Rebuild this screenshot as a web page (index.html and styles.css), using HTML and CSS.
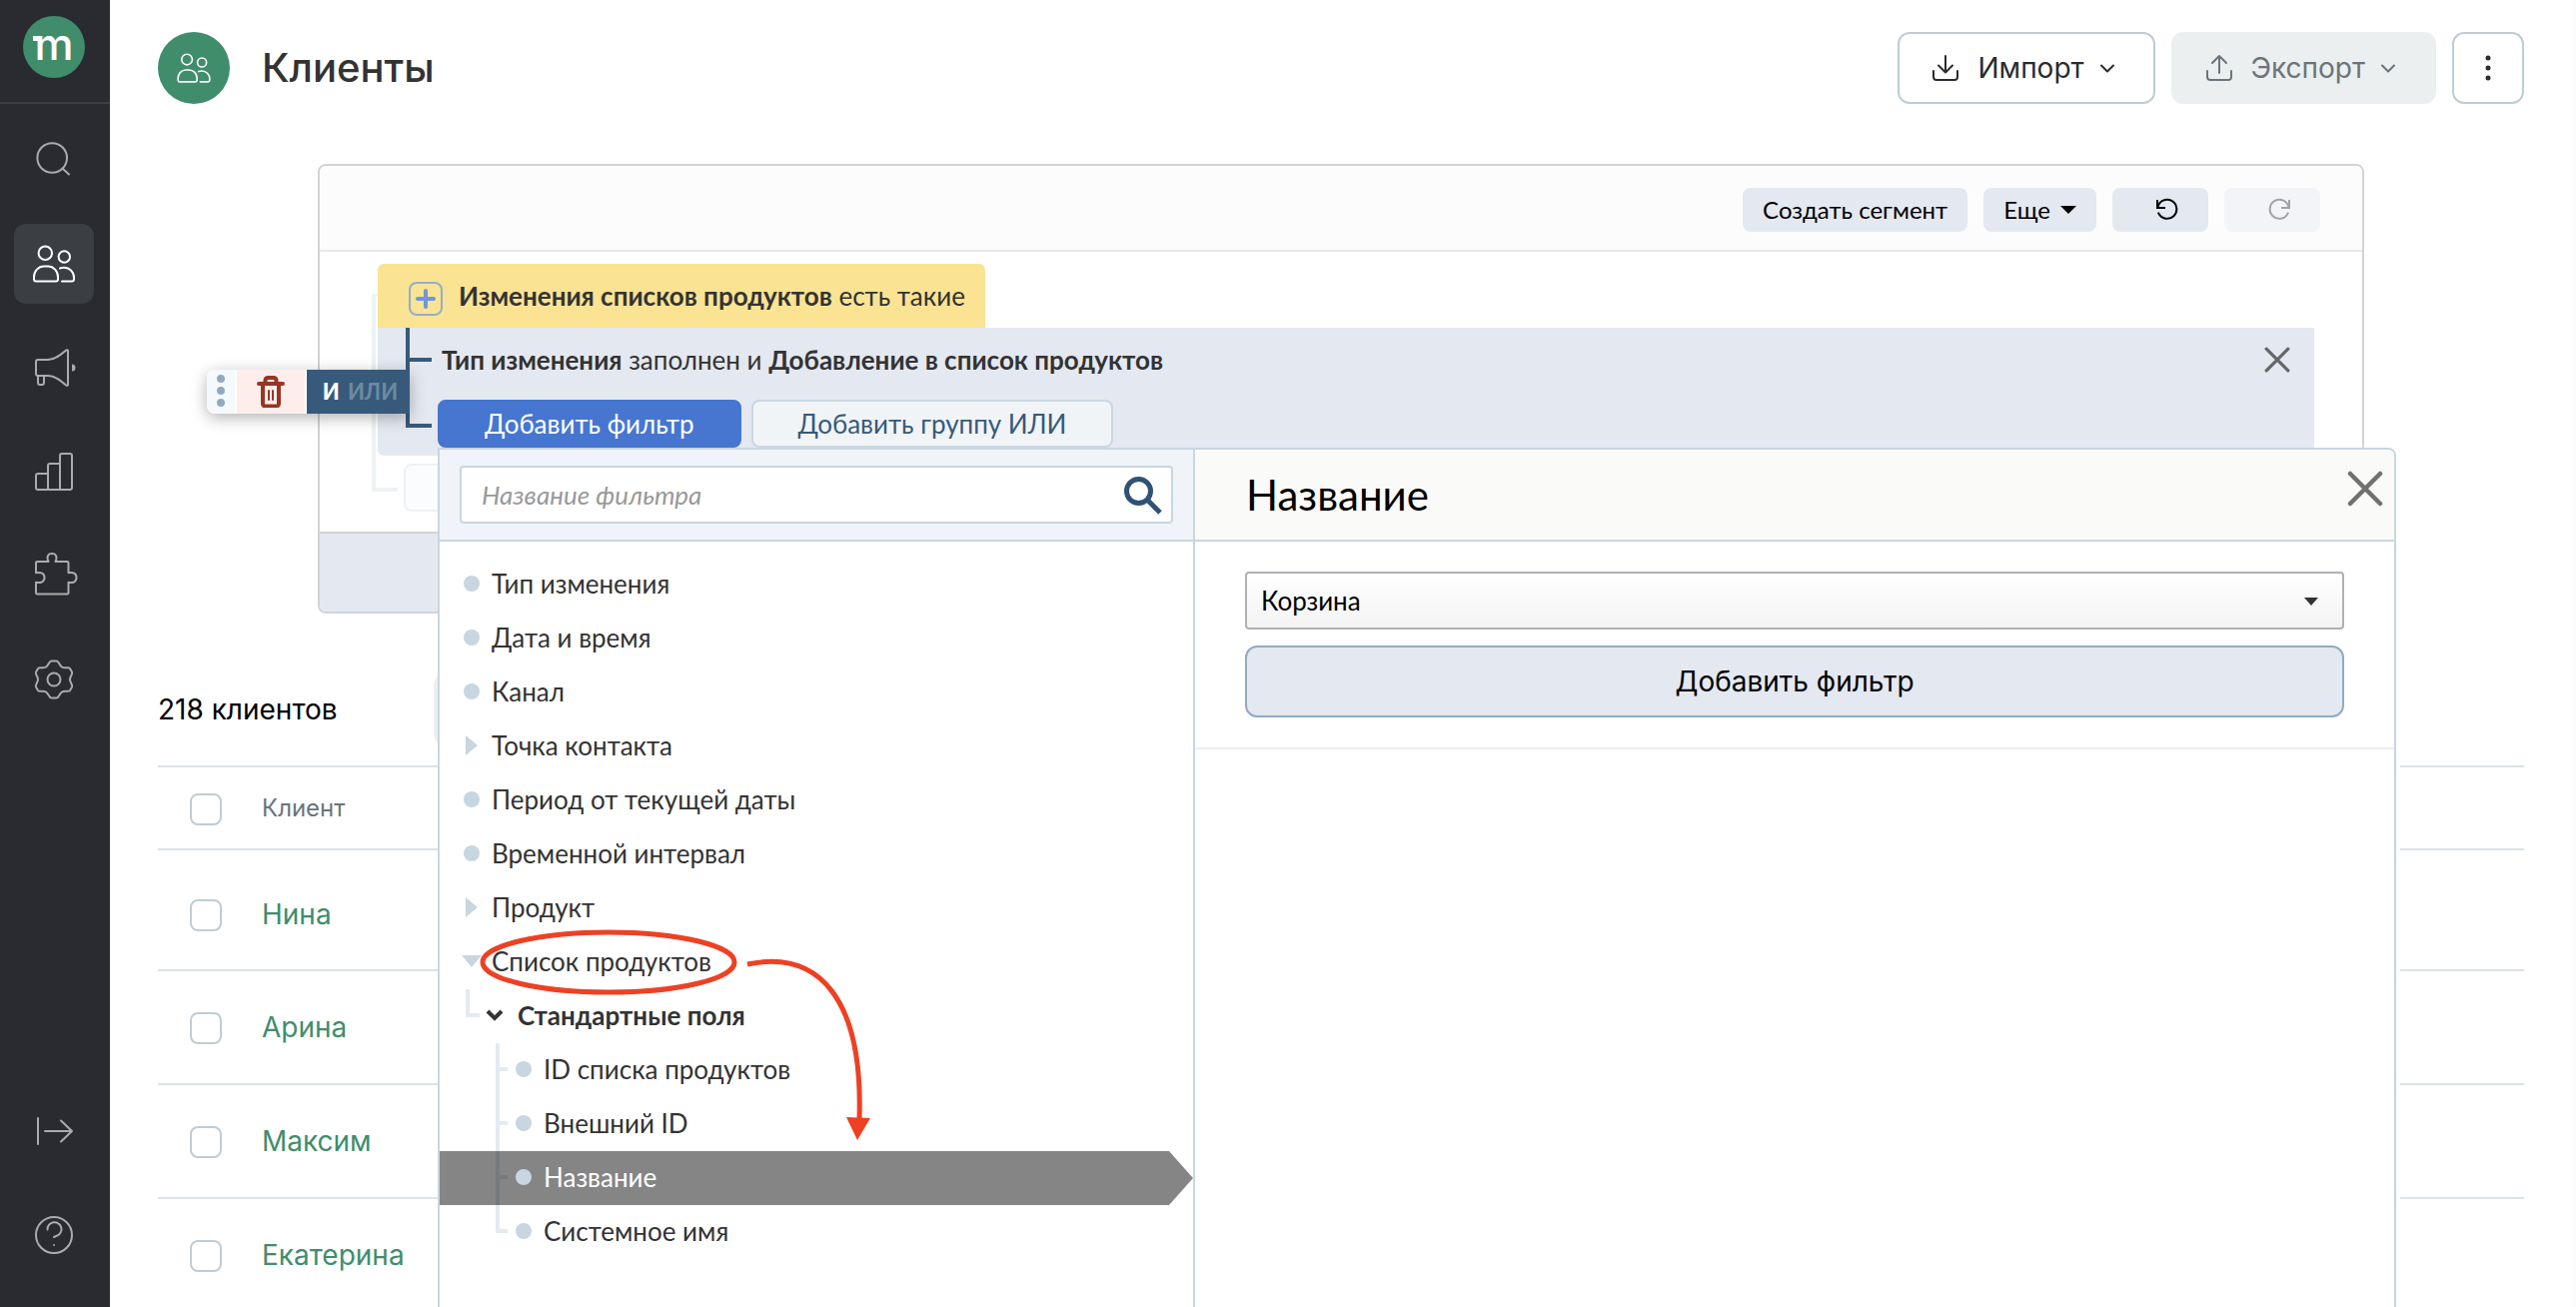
FILE: index.html
```html
<!DOCTYPE html>
<html lang="ru">
<head>
<meta charset="utf-8">
<meta name="viewport" content="width=device-width, initial-scale=1">
<title>Клиенты</title>
<link rel="stylesheet" href="styles.css">
</head>
<body>
<svg class="sprite" aria-hidden="true">
  <symbol id="i-users" viewBox="0 0 48 48"><circle cx="15.3" cy="13.3" r="6.7"/><circle cx="34.3" cy="17" r="5.7"/><path d="M4 39.5V37a10 10.500 0 0 1 10-10.500h4A10 10.500 0 0 1 28 37v2.500a2 2 0 0 1-2 2H6a2 2 0 0 1-2-2z"/><path d="M30 28.500c1.200-.5 2.500-.8 4-.8a10 10 0 0 1 10 10v1.800a2 2 0 0 1-2 2H32"/></symbol>
  <symbol id="i-chevron" viewBox="0 0 24 24"><path d="M6 9.500l6 6 6-6"/></symbol>
  <symbol id="i-close" viewBox="0 0 24 24"><path d="M2 2l20 20M22 2L2 22"/></symbol>
</svg>
<div class="app">
  <aside class="sidebar">
    <div class="sidebar__brand"><a class="logo" href="#">m</a></div>
    <nav class="sidebar__nav" aria-label="Разделы">
      <a class="nav-item" href="#" aria-label="Поиск"><svg viewBox="0 0 48 48"><circle cx="22.200" cy="22" r="14.800"/><path d="M32.500 32.500l6.500 6"/></svg></a>
      <a class="nav-item nav-item--active" href="#" aria-label="Клиенты"><svg><use href="#i-users"/></svg></a>
      <a class="nav-item" href="#" aria-label="Кампании"><svg viewBox="0 0 48 48"><path d="M8 16H18C25 16 31 11 36.500 6.300A1 1 0 0 1 38 7V41a1 1 0 0 1-1.500.7C31 37 25 32 18 32H8a2 2 0 0 1-2-2V18a2 2 0 0 1 2-2z"/><path d="M8 32v7a2 2 0 0 0 2 2h2a2 2 0 0 0 2-2v-7"/><path class="solid" d="M42 20.500a3.500 3.500 0 0 1 0 7z"/></svg></a>
      <a class="nav-item" href="#" aria-label="Отчёты"><svg viewBox="0 0 48 48"><path d="M18 26H8a2 2 0 0 0-2 2V40a2 2 0 0 0 2 2H18zM30 16H20a2 2 0 0 0-2 2V42H30zM32 6h8a2 2 0 0 1 2 2V40a2 2 0 0 1-2 2H30V8a2 2 0 0 1 2-2z"/></svg></a>
      <a class="nav-item" href="#" aria-label="Интеграции"><svg viewBox="0 0 48 48"><path d="M7.500 10H18.500C16 4.500 18.500 2 22 2S28 4.500 25.500 10H37a1.500 1.500 0 0 1 1.500 1.500V21.300C43 20 46.500 22 46.500 26S43 32 38.500 30.700V41a1.500 1.500 0 0 1-1.500 1.500H7.500A1.500 1.500 0 0 1 6 41V30.700C11 32 14.500 30 14.500 26S11 20 6 21.300V11.500A1.500 1.500 0 0 1 7.500 10z"/></svg></a>
      <a class="nav-item" href="#" aria-label="Настройки"><svg viewBox="0 0 48 48"><path d="M21.500 5.500h5c2.500 0 2.500 4 5.500 6c3 2 6.500-.5 8 1.500l2 3.500c1.200 2.300-2 4-2 7.500c0 3.500 3.200 5.200 2 7.500l-2 3.500c-1.500 2-5-.5-8 1.500c-3 2-3 6-5.500 6h-5c-2.500 0-2.500-4-5.500-6c-3-2-6.500.5-8-1.500l-2-3.500c-1.200-2.300 2-4 2-7.500c0-3.500-3.200-5.200-2-7.500l2-3.500c1.500-2 5 .5 8-1.500c3-2 3-6 5.500-6z"/><circle cx="24" cy="24" r="6.500"/></svg></a>
    </nav>
    <div class="sidebar__nav sidebar__nav--bottom">
      <a class="nav-item" href="#" aria-label="Развернуть меню"><svg viewBox="0 0 48 48"><path d="M8 11V37M15 24H42M31 13.500L42 24 31 34.500"/></svg></a>
      <a class="nav-item" href="#" aria-label="Помощь"><svg viewBox="0 0 48 48"><circle cx="24" cy="24" r="18"/><path d="M17.500 18.500a7 7 0 1 1 9.500 6.200l-3 1.300"/><circle class="solid" cx="24" cy="34" r="1"/></svg></a>
    </div>
  </aside>

  <main class="main">
    <header class="page-head">
      <span class="page-head__icon"><svg><use href="#i-users"/></svg></span>
      <h1 class="page-head__title">Клиенты</h1>
      <div class="page-head__actions">
        <button class="btn btn--outline" type="button"><svg class="btn__icon" viewBox="0 0 32 32"><path d="M16 4V20M9 13.500l7 7 7-7M4 19v6a3 3 0 0 0 3 3H25a3 3 0 0 0 3-3V19"/></svg>Импорт<svg class="btn__chevron"><use href="#i-chevron"/></svg></button>
        <button class="btn btn--muted" type="button"><svg class="btn__icon" viewBox="0 0 32 32"><path d="M16 21V4M9 11l7-7 7 7M4 19v6a3 3 0 0 0 3 3H25a3 3 0 0 0 3-3V19"/></svg>Экспорт<svg class="btn__chevron"><use href="#i-chevron"/></svg></button>
        <button class="btn btn--outline btn--square" type="button" aria-label="Ещё действия"><svg class="btn__icon" viewBox="0 0 32 32"><circle class="solid" cx="16" cy="6" r="2.500"/><circle class="solid" cx="16" cy="16" r="2.500"/><circle class="solid" cx="16" cy="26" r="2.500"/></svg></button>
      </div>
    </header>

    <section class="segment" aria-label="Фильтр клиентов">
      <div class="segment__toolbar">
        <button class="tool" type="button">Создать сегмент</button>
        <button class="tool" type="button">Еще<span class="caret"></span></button>
        <button class="tool tool--icon" type="button" aria-label="Отменить"><svg viewBox="0 0 24 24"><path d="M2 3v7h7M2.500 9.500A9.500 9.500 0 1 1 3.300 15.500"/></svg></button>
        <button class="tool tool--icon" type="button" aria-label="Повторить" disabled><svg viewBox="0 0 24 24"><path d="M22 3v7h-7M21.500 9.500A9.500 9.500 0 1 0 20.700 15.500"/></svg></button>
      </div>
      <div class="segment__body">
        <div class="group">
          <div class="group__head">
            <button class="group__plus" type="button" aria-label="Добавить условие"><svg viewBox="0 0 24 24"><path d="M12 4V20M4 12H20"/></svg></button>
            <span><b>Изменения списков продуктов</b> есть такие</span>
          </div>
          <div class="group__body">
            <div class="handle">
              <span class="handle__drag"><i></i><i></i><i></i></span>
              <button class="handle__delete" type="button" aria-label="Удалить"><svg viewBox="0 0 28 32"><path class="line" d="M6 9V28a2.500 2.500 0 0 0 2.500 2.500h11A2.500 2.500 0 0 0 22 28V9M2 8H26M8.500 7V5A3 3 0 0 1 11 2h6a3 3 0 0 1 2.500 3V7"/><path class="thin" d="M12 15v9M16 15v9"/></svg></button>
              <button class="handle__mode" type="button"><b>И</b><span>ИЛИ</span></button>
            </div>
            <div class="condition">
              <span><b>Тип изменения</b> заполнен и <b>Добавление в список продуктов</b></span>
              <button class="condition__close" type="button" aria-label="Удалить условие"><svg><use href="#i-close"/></svg></button>
            </div>
            <div class="group__actions">
              <button class="add add--primary" type="button">Добавить фильтр</button>
              <button class="add" type="button">Добавить группу ИЛИ</button>

              <div class="popover">
                <div class="popover__list">
                  <div class="search">
                    <label class="search__box">
                      <input type="text" placeholder="Название фильтра" aria-label="Название фильтра">
                      <svg viewBox="0 0 40 40"><circle cx="15.500" cy="16.500" r="12"/><path d="M24.500 25.500L37 38"/></svg>
                    </label>
                  </div>
                  <div class="tree">
                    <button class="tree__row" type="button"><i class="dot"></i>Тип изменения</button>
                    <button class="tree__row" type="button"><i class="dot"></i>Дата и время</button>
                    <button class="tree__row" type="button"><i class="dot"></i>Канал</button>
                    <button class="tree__row" type="button"><i class="arrow"></i>Точка контакта</button>
                    <button class="tree__row" type="button"><i class="dot"></i>Период от текущей даты</button>
                    <button class="tree__row" type="button"><i class="dot"></i>Временной интервал</button>
                    <button class="tree__row" type="button"><i class="arrow"></i>Продукт</button>
                    <button class="tree__row" type="button" aria-expanded="true"><i class="arrow arrow--down"></i>Список продуктов</button>
                    <button class="tree__row tree__row--section" type="button" aria-expanded="true"><svg viewBox="0 0 18 18"><path d="M2 5l7 7 7-7"/></svg>Стандартные поля</button>
                    <ul class="tree__children">
                      <li><button class="tree__row" type="button"><i class="dot"></i>ID списка продуктов</button></li>
                      <li><button class="tree__row" type="button"><i class="dot"></i>Внешний ID</button></li>
                      <li><button class="tree__row tree__row--selected" type="button"><i class="dot"></i>Название</button></li>
                      <li><button class="tree__row" type="button"><i class="dot"></i>Системное имя</button></li>
                    </ul>
                    <svg class="note" viewBox="0 0 400 220" aria-hidden="true"><ellipse cx="129" cy="33" rx="126" ry="30"/><path d="M268 35C340 20 384 70 380 190"/><path class="note__tip" d="M367 188L391 189 378 211z"/></svg>
                  </div>
                </div>
                <div class="popover__detail">
                  <div class="detail__head">
                    <h2>Название</h2>
                    <button class="detail__close" type="button" aria-label="Закрыть"><svg><use href="#i-close"/></svg></button>
                  </div>
                  <form class="detail__form">
                    <div class="select">
                      <select aria-label="Название списка"><option>Корзина</option></select>
                    </div>
                    <button class="submit" type="button">Добавить фильтр</button>
                  </form>
                </div>
              </div>
            </div>
          </div>
        </div>
        <button class="segment__add" type="button" aria-label="Добавить фильтр верхнего уровня"></button>
      </div>
      <div class="segment__foot"></div>
    </section>

    <div class="summary"><span>218 клиентов</span><span class="summary__chip"></span></div>

    <table class="clients">
      <thead>
        <tr><th class="clients__check"><input type="checkbox" aria-label="Выбрать всех"></th><th>Клиент</th></tr>
      </thead>
      <tbody>
        <tr><td><input type="checkbox" aria-label="Выбрать: Нина"></td><td><a href="#">Нина</a></td></tr>
        <tr><td><input type="checkbox" aria-label="Выбрать: Арина"></td><td><a href="#">Арина</a></td></tr>
        <tr><td><input type="checkbox" aria-label="Выбрать: Максим"></td><td><a href="#">Максим</a></td></tr>
        <tr><td><input type="checkbox" aria-label="Выбрать: Екатерина"></td><td><a href="#">Екатерина</a></td></tr>
      </tbody>
    </table>
  </main>
</div>
</body>
</html>
```

FILE: styles.css
```css
:root {
  --green: #408d6c;
  --navy: #375a7b;
  --haze: #e4e8f0;
  --edge: #c9d6e0;
  --ink: #333333;
  --ui: Inter, "Liberation Sans", sans-serif;
  --filter: Lato, "Open Sans", sans-serif;
}

*, *::before, *::after { box-sizing: border-box; }

body {
  margin: 0;
  background: #ffffff;
  color: var(--ink);
  font-family: var(--ui);
  font-size: 28px;
  line-height: 36px;
}

button, input, select {
  margin: 0;
  padding: 0;
  border: 0;
  background: none;
  color: inherit;
  font: inherit;
}

svg {
  display: block;
  fill: none;
  stroke: currentColor;
  stroke-width: 2;
  stroke-linecap: round;
  stroke-linejoin: round;
}

.solid { fill: currentColor; stroke: none; }
.sprite { position: absolute; width: 0; height: 0; }

.app {
  display: flex;
  height: 100vh;
  overflow: hidden;
}

/* Sidebar */
.sidebar {
  display: flex;
  flex-direction: column;
  flex: none;
  width: 110px;
  padding-bottom: 32px;
  background: #2a2b30;
  color: #a9abad;
}

.sidebar__brand {
  padding: 16px 23px 24px;
  border-bottom: 2px solid #3c3f44;
}

.logo {
  display: flex;
  position: relative;
  justify-content: center;
  width: 62px;
  height: 62px;
  border-radius: 50%;
  background: var(--green);
  color: #ffffff;
  font-size: 44px;
  font-weight: 500;
  line-height: 56px;
  text-decoration: none;
}

.logo::before {
  position: absolute;
  top: 20px;
  left: 10px;
  width: 6px;
  height: 5px;
  background: #ffffff;
  content: "";
}

.sidebar__nav {
  display: flex;
  flex-direction: column;
  gap: 24px;
  padding: 16px 16px 0 14px;
}

.sidebar__nav--bottom { margin-top: auto; }

.nav-item {
  display: grid;
  place-items: center;
  height: 80px;
  border-radius: 12px;
  color: inherit;
}

.nav-item svg { width: 48px; height: 48px; }
.nav-item--active { background: #3b3e43; color: #ffffff; }

/* Page */
.main {
  flex: 1;
  min-width: 0;
  padding: 32px 48px 0;
  border-right: 4px solid #fbfbfb;
  overflow: hidden;
}

.page-head {
  display: flex;
  align-items: center;
  gap: 32px;
}

.page-head__icon {
  display: grid;
  place-items: center;
  width: 72px;
  height: 72px;
  border-radius: 50%;
  background: var(--green);
  color: #ffffff;
}

.page-head__icon svg { width: 38px; height: 38px; }

.page-head__title {
  margin: 0;
  font-size: 40px;
  font-weight: 500;
  line-height: 48px;
}

.page-head__actions {
  display: flex;
  gap: 16px;
  margin-left: auto;
}

.btn {
  display: flex;
  align-items: center;
  height: 72px;
  padding: 0 34px 0 30px;
  border: 2px solid transparent;
  border-radius: 12px;
}

.btn--outline { border-color: #bfccd5; color: #2a2b30; }
.btn--muted { background: #ebefef; color: #6b747b; }
.btn__icon { width: 32px; height: 32px; margin-right: 16px; }
.btn__chevron { width: 24px; height: 24px; margin-left: 11px; }
.btn--square { justify-content: center; width: 72px; padding: 0; }
.btn--square .btn__icon { margin: 0; }

/* Segment builder */
.segment {
  margin: 60px 160px 0;
  border: 2px solid #d3d3d3;
  border-radius: 8px;
  font-family: var(--filter);
  font-size: 26px;
}

.segment__toolbar {
  display: flex;
  justify-content: flex-end;
  gap: 16px;
  padding: 22px 42px 18px 0;
  border-bottom: 2px solid var(--haze);
  border-radius: 6px 6px 0 0;
  background: #fcfcfc;
}

.tool {
  display: flex;
  align-items: center;
  height: 44px;
  padding: 0 20px;
  border-radius: 8px;
  background: var(--haze);
  color: #000000;
  font-size: 24px;
}

.tool--icon { width: 96px; padding: 0 0 0 43px; }
.tool--icon svg { width: 24px; height: 24px; stroke-linecap: square; stroke-linejoin: miter; }
.tool:disabled { opacity: .35; }

.caret {
  margin-left: 10px;
  border: 8px solid transparent;
  border-top-color: currentColor;
  border-bottom: 0;
}

.segment__body {
  position: relative;
  padding: 12px 48px 20px 58px;
}

.segment__body::before {
  position: absolute;
  top: 42px;
  left: 52px;
  width: 26px;
  height: 198px;
  border: 4px solid #edf2f4;
  border-top-width: 2px;
  border-right: 0;
  content: "";
}

.segment__add {
  display: block;
  width: 305px;
  height: 48px;
  margin: 8px 0 0 26px;
  border: 2px solid #eff1f4;
  border-radius: 8px;
  background: #fbfcfd;
}

.segment__foot {
  height: 80px;
  border-top: 2px solid #d3d3d3;
  border-radius: 0 0 6px 6px;
  background: var(--haze);
}

.group { position: relative; z-index: 1; }

.group__head {
  display: inline-flex;
  align-items: center;
  gap: 16px;
  height: 64px;
  padding: 0 20px 0 31px;
  border-radius: 6px 6px 0 0;
  background: #fae392;
  vertical-align: top;
}

.group__plus {
  display: grid;
  place-items: center;
  width: 34px;
  height: 34px;
  margin-top: 6px;
  border: 2px solid #93aed0;
  border-radius: 8px;
  color: #7196dd;
}

.group__plus svg { width: 24px; height: 24px; stroke-width: 4; }

.group__body {
  position: relative;
  padding: 12px 0 8px 60px;
  border-radius: 0 0 6px 6px;
  background: var(--haze);
}

.group__body::before {
  position: absolute;
  top: 0;
  left: 28px;
  width: 26px;
  height: 100px;
  border: solid var(--navy);
  border-width: 0 0 4px 4px;
  content: "";
}

.condition {
  display: flex;
  position: relative;
  align-items: center;
  justify-content: space-between;
  height: 40px;
  margin-bottom: 20px;
  padding: 0 24px 0 4px;
}

.condition::before {
  position: absolute;
  top: 18px;
  left: -28px;
  width: 22px;
  height: 4px;
  background: var(--navy);
  content: "";
}

.condition__close { padding: 0; color: #666666; }
.condition__close svg { width: 26px; height: 26px; stroke-width: 3; }

.handle {
  display: flex;
  position: absolute;
  z-index: 1;
  top: 42px;
  right: calc(100% - 32px);
  gap: 2px;
  height: 44px;
  border-radius: 8px 0 0 8px;
  background: #ffffff;
  box-shadow: 0 4px 16px rgba(0, 0, 0, .3);
  font-size: 22px;
}

.handle__drag {
  display: flex;
  flex-direction: column;
  align-items: center;
  justify-content: center;
  gap: 4px;
  width: 28px;
  padding-bottom: 2px;
  border-radius: 8px 0 0 8px;
  background: #f6f9fb;
}

.handle__drag i { width: 8px; height: 8px; border-radius: 50%; background: #90abc1; }

.handle__delete {
  display: grid;
  place-items: center;
  width: 68px;
  background: #fdeeeb;
  color: #983523;
}

.handle__delete svg { width: 28px; height: 32px; }
.handle__delete .line { stroke-width: 4; }

.handle__mode {
  display: flex;
  align-items: center;
  justify-content: center;
  gap: 8px;
  width: 103px;
  padding-left: 4px;
  background: var(--navy);
  color: #6d8aa2;
  font-weight: 700;
}

.handle__mode b { color: #ffffff; }

.group__actions {
  display: flex;
  position: relative;
  gap: 10px;
}

.add {
  height: 48px;
  padding: 0 45px;
  border: 2px solid #c9d7e0;
  border-radius: 8px;
  background: #f1f4f7;
  color: var(--navy);
}

.add--primary {
  border-color: #4676d0;
  background: #4676d0;
  color: #ffffff;
}

/* Filter picker */
.popover {
  display: grid;
  position: absolute;
  top: 100%;
  right: -82px;
  left: 0;
  grid-template-columns: 756px 1fr;
  min-height: 100vh;
  border: 2px solid var(--edge);
  border-radius: 0 8px 0 0;
  background: #ffffff;
  box-shadow: 4px 0 0 #ffffff;
}

.popover__list { border-right: 2px solid var(--edge); }

.search {
  padding: 16px 20px;
  border-bottom: 2px solid var(--edge);
  background: #f0f4f8;
}

.search__box {
  display: flex;
  align-items: center;
  height: 58px;
  padding: 0 8px 0 20px;
  border: 2px solid var(--edge);
  border-radius: 4px;
  background: #ffffff;
}

.search__box input { flex: 1; height: 54px; outline: 0; }
.search__box input::placeholder { color: #999999; font-style: italic; opacity: 1; }
.search__box svg { width: 40px; height: 40px; color: #2f5276; stroke-width: 5; stroke-linecap: butt; }

.tree { position: relative; padding-top: 16px; }

.tree__row {
  display: flex;
  position: relative;
  align-items: center;
  width: 100%;
  height: 54px;
  padding: 0 0 2px 24px;
  text-align: left;
}

.dot {
  flex: none;
  width: 16px;
  height: 16px;
  margin-right: 12px;
  border-radius: 50%;
  background: #c7d6e0;
}

.arrow {
  flex: none;
  width: 12px;
  height: 20px;
  margin: 0 14px 0 2px;
  background: #c7d6e0;
  clip-path: polygon(0 0, 100% 50%, 0 100%);
}

.arrow--down {
  width: 20px;
  height: 12px;
  margin: 0 10px 0 -2px;
  clip-path: polygon(0 0, 100% 0, 50% 100%);
}

.tree__row--section { padding-left: 46px; font-weight: 700; }
.tree__row--section svg { width: 18px; height: 18px; margin-right: 14px; stroke-width: 4; stroke-linecap: butt; stroke-linejoin: miter; }

.tree__row--section::before {
  position: absolute;
  top: 0;
  left: 26px;
  width: 14px;
  height: 28px;
  border: solid #e3eaf0;
  border-width: 0 0 4px 4px;
  content: "";
}

.tree__children {
  margin: 0;
  padding: 0;
  list-style: none;
}

.tree__children li {
  position: relative;
  background:
    linear-gradient(#e3eaf0, #e3eaf0) 56px 0 / 4px 100% no-repeat,
    linear-gradient(#e3eaf0, #e3eaf0) 60px 24px / 8px 4px no-repeat;
}

.tree__children li:last-child {
  background-size: 4px 28px, 8px 4px;
}

.tree__children .tree__row { padding-left: 76px; }

.tree__row--selected {
  background: rgba(0, 0, 0, .48);
  color: #ffffff;
  clip-path: polygon(0 0, calc(100% - 24px) 0, 100% 50%, calc(100% - 24px) 100%, 0 100%);
}

.note {
  position: absolute;
  top: 388px;
  left: 40px;
  width: 400px;
  height: 220px;
  color: #ee4023;
  stroke-width: 5;
  stroke-linecap: butt;
  pointer-events: none;
}

.note__tip { fill: currentColor; stroke: none; }

.detail__head {
  display: flex;
  align-items: center;
  justify-content: space-between;
  height: 92px;
  padding: 0 11px 0 51px;
  border-bottom: 2px solid var(--edge);
  border-radius: 0 6px 0 0;
  background: #fafaf8;
}

.detail__head h2 {
  margin: 0;
  color: #000000;
  font-size: 42px;
  font-weight: 400;
  line-height: 52px;
}

.detail__close { margin-bottom: 12px; color: #707070; }
.detail__close svg { width: 36px; height: 36px; stroke-width: 3; }

.detail__form {
  display: grid;
  gap: 16px;
  padding: 30px 50px;
  border-bottom: 2px solid #eeeeee;
  color: #000000;
}

.select { position: relative; }

.select select {
  display: block;
  width: 100%;
  height: 58px;
  padding: 0 60px 0 14px;
  border: 2px solid #b0b0b5;
  border-radius: 4px;
  background: linear-gradient(#ffffff, #f3f3f3);
  appearance: none;
}

.select::after {
  position: absolute;
  top: 26px;
  right: 26px;
  border: 7px solid transparent;
  border-top: 8px solid #333333;
  border-bottom: 0;
  content: "";
}

.submit {
  height: 72px;
  border: 2px solid #90abc3;
  border-radius: 12px;
  background: var(--haze);
  font-family: var(--ui);
  font-size: 28px;
}

/* Client list */
.summary {
  display: flex;
  align-items: center;
  gap: 96px;
  margin: 60px 0 20px;
  color: #000000;
}

.summary__chip {
  width: 72px;
  height: 72px;
  border-radius: 12px;
  background: #ebefef;
}

.clients {
  width: 100%;
  border-collapse: separate;
  border-spacing: 0;
  border-top: 2px solid #dbe2e9;
}

.clients th, .clients td {
  height: 114px;
  padding: 0;
  border-bottom: 2px solid #dbe2e9;
  text-align: left;
}

.clients th {
  height: 83px;
  color: #6b747b;
  font-size: 24px;
  font-weight: 400;
}

.clients tbody tr:first-child td { height: 121px; padding-top: 8px; }
.clients__check { width: 104px; }

.clients input {
  display: block;
  width: 32px;
  height: 32px;
  margin: 2px 0 0 32px;
  border: 2px solid #bfccd5;
  border-radius: 8px;
  appearance: none;
}

.clients a { color: var(--green); text-decoration: none; }
```
